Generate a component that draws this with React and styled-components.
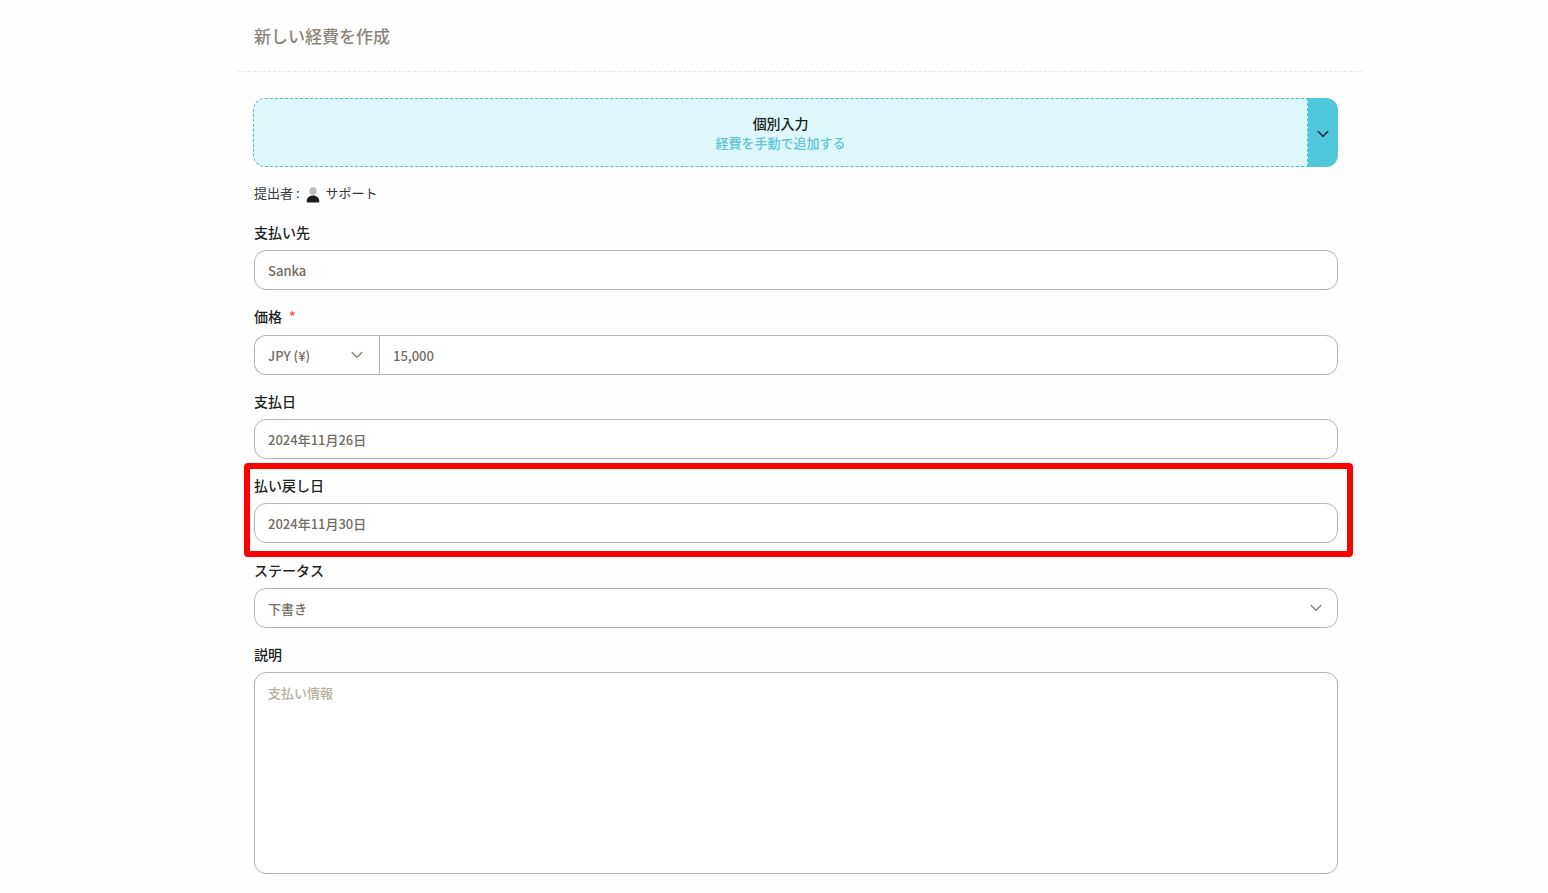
import React, { useState } from 'react';

import styled, { createGlobalStyle } from "styled-components";

const GlobalStyle = createGlobalStyle`
    * {
        box-sizing: border-box;
    }
    body {
        margin: 0;
        background: #fefefe;
        color: #1c2321;
        font-family: "Noto Sans CJK JP", sans-serif;
        font-weight: 500;
    }
    button, input, select, textarea {
        margin: 0;
        font: inherit;
        color: inherit;
    }
`;

const Page = styled.main`
    margin: 0 12% 0 238px;
`;

const Header = styled.header`
    padding: 23px 16px;
    border-bottom: 1px dashed #e9e6e0;

    h1 {
        margin: 0;
        font-size: 17px;
        line-height: 25px;
        font-weight: 500;
        color: #8c857b;
    }
`;

const Form = styled.form`
    display: flex;
    flex-direction: column;
    gap: 16px;
    padding: 26px 24px 19px 16px;
`;

const EntryMode = styled.div`
    display: flex;
    height: 69px;
    margin-left: -1px;
`;

const ModeButton = styled.button`
    flex: 1;
    display: flex;
    flex-direction: column;
    align-items: center;
    justify-content: center;
    padding: 0;
    border: 1px dashed #52bccb;
    border-radius: 12px 0 0 12px;
    background: #ddf7fc;
    font-size: 14px;
    line-height: 20px;

    small {
        font-size: 13px;
        color: #5fc3d6;
    }
`;

const ModeToggle = styled.button`
    display: flex;
    align-items: center;
    justify-content: center;
    width: 30px;
    padding: 2px 0 0;
    border: 0;
    border-radius: 0 12px 12px 0;
    background: #50c8da;
`;

const Submitter = styled.div`
    display: flex;
    align-items: flex-start;
    gap: 6px;
    height: 23px;
    font-size: 13px;
    line-height: 20px;
    font-weight: 400;
    color: #35393a;

    svg {
        margin-top: 4px;
    }
`;

const Field = styled.div`
    display: flex;
    flex-direction: column;
`;

const Label = styled.label`
    padding-bottom: 8px;
    font-size: 14px;
    line-height: ${({ $required }) => ($required ? '21px' : '20px')};

    span {
        margin-left: 7px;
        color: #f1543f;
    }
`;

const Control = styled.input`
    width: 100%;
    height: 40px;
    padding: 0 13px;
    border: 1px solid #b5b5b5;
    border-radius: 12px;
    background: #fff;
    font-size: 13px;
    color: #716c64;
    outline: none;
`;

const TextArea = styled(Control)`
    display: block;
    height: 202px;
    padding: 10px 13px;
    line-height: 20px;
    resize: none;

    &::placeholder {
        color: #b5ae9f;
        opacity: 1;
    }
`;

const SelectWrap = styled.div`
    display: grid;
    align-items: center;
    width: ${({ $width }) => $width || '100%'};

    > * {
        grid-area: 1 / 1;
    }
    svg {
        justify-self: end;
        margin-right: 16px;
        pointer-events: none;
    }
`;

const Select = styled(Control)`
    appearance: none;
`;

const PriceRow = styled.div`
    display: flex;

    select {
        border-right: 0;
        border-radius: 12px 0 0 12px;
    }
    input {
        flex: 1;
        border-radius: 0 12px 12px 0;
    }
`;

const Highlight = styled.div`
    margin: -12px -15px -13px -10px;
    padding: 6px 9px 8px 4px;
    border: 6px solid #fe0000;
    border-radius: 4px;
`;

const Chevron = ({ color = '#8c857b' }) => (
    <svg width="12" height="12" viewBox="0 0 12 12" fill="none" stroke={color} strokeWidth="1.5" strokeLinecap="round" strokeLinejoin="round" aria-hidden="true">
        <path d="M1.2 3.5 6 8.3l4.8-4.8" />
    </svg>
);

const PersonIcon = () => (
    <svg width="14" height="16" viewBox="0 0 14 16" aria-hidden="true">
        <circle cx="7" cy="4" r="3.7" fill="#bcbcbc" />
        <path d="M.7 14.3C.7 10.8 3.4 8.5 7 8.5s6.3 2.3 6.3 5.8c0 .9-.4 1.3-1.3 1.3H2c-.9 0-1.3-.4-1.3-1.3Z" fill="#1b1b1b" />
    </svg>
);

const TextField = ({ id, label, initial }) => {
    const [value, setValue] = useState(initial);

    return (
        <Field>
            <Label htmlFor={id}>{label}</Label>
            <Control id={id} type="text" value={value} onChange={(e) => setValue(e.target.value)} />
        </Field>
    );
}

const App = () => {
    return (
        <>
            <GlobalStyle />
            <Page>
                <Header>
                    <h1>新しい経費を作成</h1>
                </Header>
                <Form>
                    <EntryMode>
                        <ModeButton type="button">
                            個別入力
                            <small>経費を手動で追加する</small>
                        </ModeButton>
                        <ModeToggle type="button" aria-label="入力方法を選択">
                            <Chevron color="#123" />
                        </ModeToggle>
                    </EntryMode>
                    <Submitter>
                        <span>提出者 :</span>
                        <PersonIcon />
                        <span>サポート</span>
                    </Submitter>
                    <TextField id="payee" label="支払い先" initial="Sanka" />
                    <Field>
                        <Label htmlFor="price" $required>価格<span>*</span></Label>
                        <PriceRow>
                            <SelectWrap $width="125px">
                                <Select as="select" aria-label="通貨" defaultValue="JPY">
                                    <option value="JPY">JPY (¥)</option>
                                    <option value="USD">USD ($)</option>
                                </Select>
                                <Chevron />
                            </SelectWrap>
                            <Control id="price" type="text" inputMode="numeric" defaultValue="15,000" required />
                        </PriceRow>
                    </Field>
                    <TextField id="paid" label="支払日" initial="2024年11月26日" />
                    <Highlight>
                        <TextField id="refunded" label="払い戻し日" initial="2024年11月30日" />
                    </Highlight>
                    <Field>
                        <Label htmlFor="status">ステータス</Label>
                        <SelectWrap>
                            <Select as="select" id="status" defaultValue="draft">
                                <option value="draft">下書き</option>
                                <option value="submitted">提出済み</option>
                            </Select>
                            <Chevron />
                        </SelectWrap>
                    </Field>
                    <Field>
                        <Label htmlFor="description">説明</Label>
                        <TextArea as="textarea" id="description" placeholder="支払い情報" />
                    </Field>
                </Form>
            </Page>
        </>
    )
}

export default App;
